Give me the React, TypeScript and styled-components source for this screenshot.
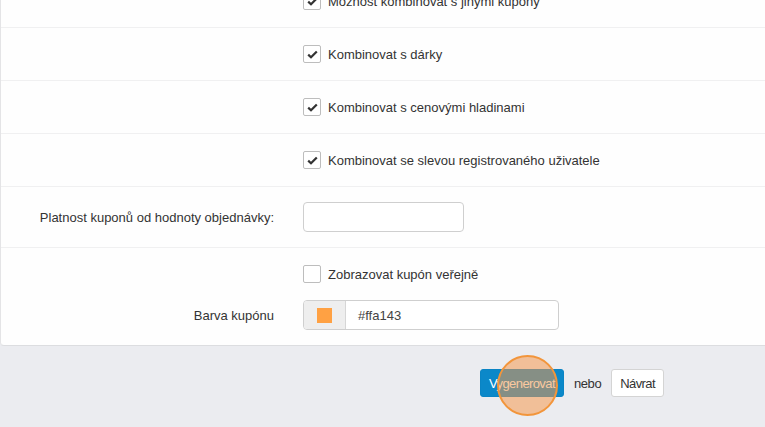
import React from 'react';
import styled, { createGlobalStyle } from 'styled-components';

const GlobalStyle = createGlobalStyle`
  html, body {
    margin: 0;
    padding: 0;
    background: #ebecf0;
    overflow: hidden;
  }
  body {
    font-family: 'Liberation Sans', Arial, sans-serif;
    font-size: 13px;
    color: #333;
  }
`;

const Page = styled.div`
  width: 765px;
  height: 427px;
  overflow: hidden;
  position: relative;
`;

const Panel = styled.div`
  margin-top: -25px;
  width: 800px;
  background: #fefefe;
  border-left: 1px solid #e4e4e6;
  border-bottom: 1px solid #dcdde0;
  border-bottom-left-radius: 4px;
`;

const FormRow = styled.div<{ $h: number; $last?: boolean }>`
  display: grid;
  grid-template-columns: 287px 1fr;
  height: ${(p) => p.$h}px;
  box-sizing: border-box;
  border-bottom: ${(p) => (p.$last ? 'none' : '1px solid #f0f0f1')};
  align-items: center;
`;

const StackRow = styled.div`
  display: grid;
  grid-template-columns: 287px 1fr;
  grid-template-rows: 30px 30px;
  row-gap: 11px;
  padding-top: 11px;
  height: 97px;
  box-sizing: border-box;
  align-items: center;
`;

const Label = styled.label`
  text-align: right;
  padding-right: 14px;
  color: #333;
`;

const Control = styled.div`
  padding-left: 15px;
  display: flex;
  align-items: center;
`;

const CheckLabel = styled.label`
  display: flex;
  align-items: center;
  gap: 7px;
  color: #333;
  cursor: pointer;
`;

const Box = styled.span`
  width: 18px;
  height: 18px;
  box-sizing: border-box;
  border: 1px solid #bdbdbd;
  border-radius: 2px;
  background: #fff;
  display: flex;
  align-items: center;
  justify-content: center;
`;

const TextInput = styled.input`
  width: 161px;
  height: 30px;
  box-sizing: border-box;
  border: 1px solid #cfcfcf;
  border-radius: 4px;
  background: #fff;
  padding: 0 8px;
  font: inherit;
`;

const ColorGroup = styled.div`
  display: flex;
  width: 256px;
  height: 30px;
  box-sizing: border-box;
  border: 1px solid #cfcfcf;
  border-radius: 4px;
  overflow: hidden;
  background: #fff;
`;

const Addon = styled.span`
  width: 41px;
  background: #eeeeee;
  border-right: 1px solid #d6d6d6;
  display: flex;
  align-items: center;
  justify-content: center;
`;

const Swatch = styled.span<{ $color: string }>`
  width: 15px;
  height: 15px;
  background: ${(p) => p.$color};
`;

const ColorText = styled.span`
  display: flex;
  align-items: center;
  padding-left: 12px;
  color: #444;
`;

const Actions = styled.div`
  display: flex;
  align-items: center;
  gap: 10px;
  padding: 23px 0 0 480px;
  position: relative;
`;

const Button = styled.button<{ $primary?: boolean }>`
  height: 28px;
  box-sizing: border-box;
  padding: 0 8px;
  border-radius: 3px;
  font: inherit;
  font-size: 13px;
  letter-spacing: -0.6px;
  border: 1px solid ${(p) => (p.$primary ? '#0a84c4' : '#d4d4d4')};
  background: ${(p) => (p.$primary ? '#0b88c9' : '#fff')};
  color: ${(p) => (p.$primary ? '#fff' : '#333')};
`;

const Or = styled.span`
  letter-spacing: -0.4px;
  color: #333;
`;

const ClickMark = styled.span`
  position: absolute;
  left: 497px;
  top: 355px;
  width: 61px;
  height: 61px;
  box-sizing: border-box;
  border-radius: 50%;
  border: 2px solid #f2953b;
  background: rgba(247, 150, 70, 0.52);
  pointer-events: none;
`;

const Check = ({ checked }: { checked: boolean }) => (
  <Box>
    {checked && (
      <svg width="11" height="9" viewBox="0 0 11 9">
        <path d="M1.2 4.6 L4 7.3 L9.8 1.4" fill="none" stroke="#333" strokeWidth="2.2" />
      </svg>
    )}
  </Box>
);

const CheckRow = ({ text, checked = true }: { text: string; checked?: boolean }) => (
  <FormRow $h={53}>
    <span />
    <Control>
      <CheckLabel>
        <Check checked={checked} />
        {text}
      </CheckLabel>
    </Control>
  </FormRow>
);

export default function App() {
  return (
    <Page>
      <GlobalStyle />
      <Panel>
        <CheckRow text="Možnost kombinovat s jinými kupony" />
        <CheckRow text="Kombinovat s dárky" />
        <CheckRow text="Kombinovat s cenovými hladinami" />
        <CheckRow text="Kombinovat se slevou registrovaného uživatele" />
        <FormRow $h={61}>
          <Label>Platnost kuponů od hodnoty objednávky:</Label>
          <Control>
            <TextInput type="text" />
          </Control>
        </FormRow>
        <StackRow>
          <span />
          <Control>
            <CheckLabel>
              <Check checked={false} />
              Zobrazovat kupón veřejně
            </CheckLabel>
          </Control>
          <Label>Barva kupónu</Label>
          <Control>
            <ColorGroup>
              <Addon>
                <Swatch $color="#ffa143" />
              </Addon>
              <ColorText>#ffa143</ColorText>
            </ColorGroup>
          </Control>
        </StackRow>
      </Panel>
      <Actions>
        <Button $primary>Vygenerovat</Button>
        <Or>nebo</Or>
        <Button>Návrat</Button>
      </Actions>
      <ClickMark />
    </Page>
  );
}
